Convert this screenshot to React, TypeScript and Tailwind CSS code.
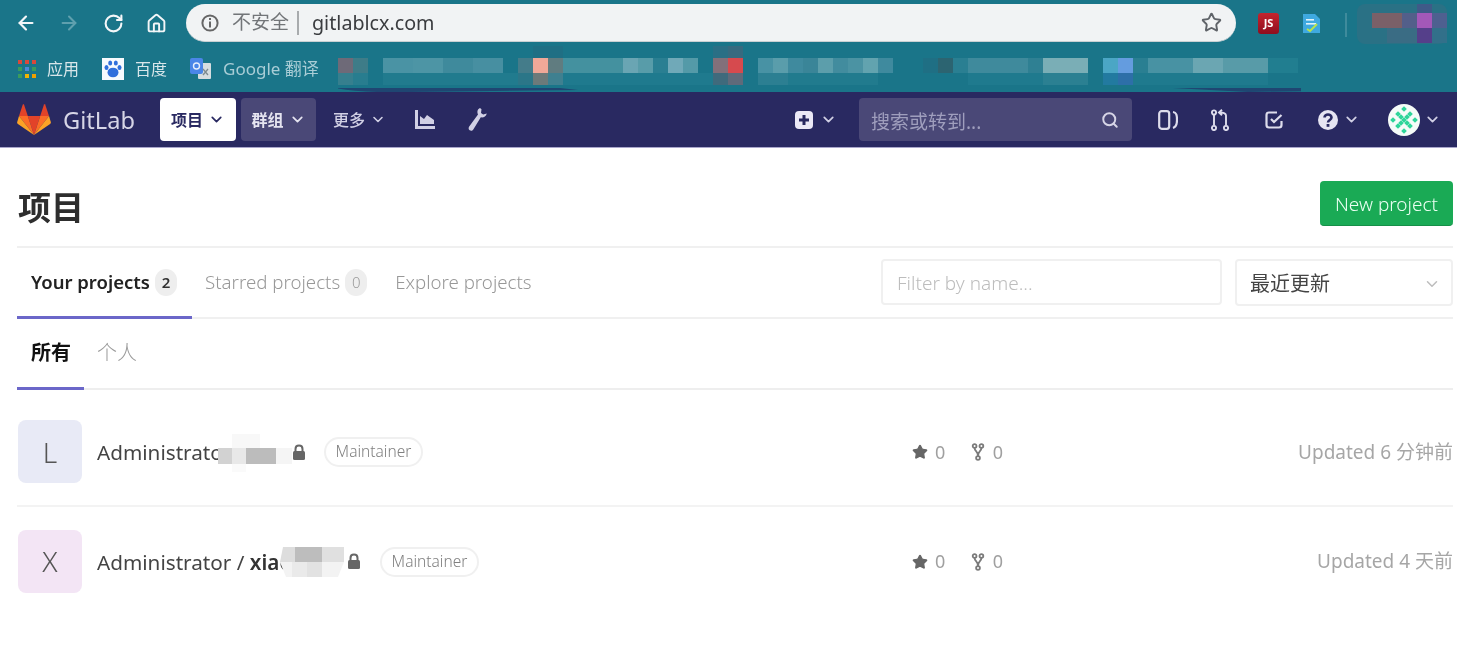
import React from "react";
import { ArrowLeft, ArrowRight, RotateCw, Home, Star, ChevronDown, Search } from "lucide-react";

const top: [number, number, string][] = [
  [0,15,"#6e6a78"],[15,15,"#3e7c88"],[45,30,"#4a93a4"],[75,30,"#4d95a5"],[105,30,"#3f8a9c"],[135,30,"#478fa1"],[180,15,"#447c8a"],[195,15,"#f0a898"],[210,15,"#607c80"],[225,60,"#44919f"],[285,15,"#6aa5b3"],[300,15,"#589ca9"],[315,15,"#2a7f92"],[330,15,"#70a9b8"],[345,15,"#549aa8"],[375,15,"#82707a"],[390,15,"#d64a4e"],[420,15,"#4892a4"],[435,15,"#5a9dab"],[450,15,"#3f8a9e"],[465,15,"#3a8598"],[480,15,"#5c9eab"],[495,15,"#428c9e"],[510,15,"#4b93a3"],[525,15,"#62a3af"],[540,15,"#3f8a9e"],[585,15,"#1f6f84"],[600,15,"#2c6471"],[615,15,"#2a7f92"],[630,60,"#3f8a9c"],[690,15,"#2f8093"],[705,45,"#7aaeb6"],[765,15,"#4ba6c5"],[780,15,"#649cdf"],[795,15,"#2a7f92"],[810,45,"#4892a3"],[855,30,"#6ba6b2"],[885,45,"#589ba8"],[930,30,"#217e90"],
];
const bottom: [number, number, string][] = [
  [0,15,"#367f8e"],[15,15,"#287d8f"],[45,150,"#217b8e"],[180,15,"#2b7688"],[195,15,"#6c7a7a"],[210,15,"#3f8090"],[225,150,"#1f7a8e"],[375,15,"#3f6a7c"],[390,15,"#5f6a7a"],[420,30,"#2c7f92"],[450,90,"#217b8e"],[630,90,"#1f7a8e"],[690,15,"#1f7a8e"],[705,45,"#2b8092"],[765,15,"#227aa0"],[780,15,"#2d6fa8"],[795,135,"#1f7a8e"],
];

function Mosaic() {
  return (
    <svg width="963" height="46" viewBox="0 0 963 46" className="shrink-0">
      <rect x="375" y="-2" width="15" height="15" fill="#2a6f85" />
      <rect x="390" y="-2" width="15" height="15" fill="#376a7f" />
      <rect x="195" y="-2" width="30" height="15" fill="#1f6f84" />
      {top.map(([x, w, c], i) => <rect key={i} x={x} y="12" width={w} height="15" fill={c} />)}
      {bottom.map(([x, w, c], i) => <rect key={i} x={x} y="27" width={w} height="12" fill={c} />)}
      <path d="M-2 42 Q20 47 70 46 L240 44 L222 42 Z" fill="#1f4672" />
      <path d="M835 42 L1000 42 L975 45 L910 46 Z" fill="#1f4672" />
    </svg>
  );
}

function TopRightMosaic() {
  return (
    <svg width="90" height="40" viewBox="0 0 90 40" className="shrink-0 ml-[10px]">
      <rect x="0" y="0" width="90" height="40" rx="8" fill="#2a7185" />
      <rect x="15" y="9" width="30" height="15" fill="#7a6068" />
      <rect x="45" y="9" width="15" height="15" fill="#535f8a" />
      <rect x="60" y="9" width="15" height="15" fill="#a358b8" />
      <rect x="75" y="9" width="15" height="15" fill="#4e6090" />
      <rect x="60" y="0" width="15" height="9" fill="#3f5a88" />
      <rect x="60" y="24" width="15" height="15" fill="#553f8a" />
      <rect x="30" y="24" width="30" height="15" fill="#3a6c84" />
      <rect x="75" y="24" width="15" height="15" fill="#32708a" />
    </svg>
  );
}

function Tanuki() {
  return (
    <svg width="34" height="32" viewBox="0 0 34 32" className="shrink-0">
      <path d="M17 31 L23.2 12 L10.8 12 Z" fill="#e24329" />
      <path d="M17 31 L10.8 12 L2 12 Z" fill="#fc6d26" />
      <path d="M2 12 L0.2 18 C0 18.8 0.2 19.5 0.9 20 L17 31 Z" fill="#fca326" />
      <path d="M2 12 L10.8 12 L7 0.6 C6.8 0 6 0 5.8 0.6 Z" fill="#e24329" />
      <path d="M17 31 L23.2 12 L32 12 Z" fill="#fc6d26" />
      <path d="M32 12 L33.8 18 C34 18.8 33.8 19.5 33.1 20 L17 31 Z" fill="#fca326" />
      <path d="M32 12 L23.2 12 L27 0.6 C27.2 0 28 0 28.2 0.6 Z" fill="#e24329" />
    </svg>
  );
}

function Identicon() {
  const cells = [[8,8],[20,8],[8,20],[20,20],[14,14],[14,3],[14,25],[3,14],[25,14],[11,11],[17,11],[11,17],[17,17]];
  return (
    <svg width="32" height="32" viewBox="0 0 32 32" className="shrink-0">
      <circle cx="16" cy="16" r="16" fill="#f5fbf8" />
      {cells.map(([x, y], i) => <rect key={i} x={x} y={y} width="4" height="4" transform={`rotate(45 ${x + 2} ${y + 2})`} fill="#2ed59a" />)}
    </svg>
  );
}

function Chev({ className }: { className: string }) {
  return <ChevronDown size={17} strokeWidth={2.4} className={className} />;
}

function Badge({ n, dark }: { n: string; dark?: boolean }) {
  return (
    <span className={`mt-[1px] flex items-center justify-center w-[22px] h-[27px] rounded-full bg-[#eeeeee] text-[15px] ${dark ? "text-[#333333]" : "text-[#9a9a9a]"}`}>{n}</span>
  );
}

function ForkIcon() {
  return (
    <svg width="14" height="18" viewBox="0 0 14 18" fill="none" stroke="#7a7a7a" strokeWidth="1.8" className="shrink-0 block">
      <circle cx="3.6" cy="3" r="1.9" />
      <circle cx="10.4" cy="3" r="1.9" />
      <circle cx="7" cy="15" r="1.9" />
      <path d="M3.6 5 C3.6 8.5 7 8 7 13 M10.4 5 C10.4 8.5 7 8 7 13" />
    </svg>
  );
}

function LockIcon({ className }: { className: string }) {
  return (
    <svg width="14" height="16" viewBox="0 0 14 16" className={`shrink-0 ${className}`}>
      <path d="M3.5 8 V5 C3.5 0.4 10.5 0.4 10.5 5 V8" fill="none" stroke="#666666" strokeWidth="2" />
      <rect x="1" y="7" width="12" height="9" rx="1.5" fill="#666666" />
    </svg>
  );
}

function Stats({ updated }: { updated: string }) {
  return (
    <>
      <div className="w-[91px] shrink-0 pt-[1px] flex items-center text-[18px] text-[#a0a0a0]">
        <Star size={16} fill="#666666" stroke="#666666" strokeWidth={2} className="shrink-0" />
        <span className="ml-[7px] w-[11px]">0</span>
        <span className="ml-[25px]"><ForkIcon /></span>
        <span className="ml-[8px]">0</span>
      </div>
      <div className="flex-1 pt-[1px] text-right text-[19px] text-[#a6a6a6] whitespace-nowrap">{updated}</div>
    </>
  );
}

export default function App() {
  return (
    <div className="w-[1457px] h-[664px] overflow-hidden bg-white [filter:blur(0.35px)] font-['Noto_Sans','Noto_Sans_CJK_SC',sans-serif]">
      {/* browser chrome */}
      <div className="h-[92px] bg-[#1a7589] text-white">
        <div className="h-[46px] pt-[4px] flex items-start">
          <div className="flex items-center h-[38px]">
            <ArrowLeft size={22} strokeWidth={2.4} className="ml-[15px] text-[#f3f6f8]" />
            <ArrowRight size={22} strokeWidth={2.2} className="ml-[21px] text-[#5fa0ae]" />
            <RotateCw size={21} strokeWidth={2.4} className="ml-[23px] text-[#f3f6f8]" />
            <Home size={21} strokeWidth={2.2} className="ml-[22px] text-[#f3f6f8]" />
          </div>
          <div className="ml-[19px] w-[1050px] h-[38px] rounded-full bg-[#f1f3f4] border-b border-[#c9d0d3] flex items-center">
            <svg width="18" height="18" viewBox="0 0 18 18" fill="none" className="ml-[15px] shrink-0">
              <circle cx="9" cy="9" r="7.6" stroke="#666" strokeWidth="2" />
              <rect x="8" y="4" width="2" height="2" fill="#666" />
              <rect x="8" y="7.5" width="2" height="6" fill="#666" />
            </svg>
            <span className="ml-[13px] text-[19px] text-[#727578]">不安全</span>
            <span className="ml-[8px] w-[2px] h-[24px] bg-[#a8abad]"></span>
            <span className="ml-[13px] text-[19.7px] leading-none text-[#3a3c3f]">gitlablcx.com</span>
            <Star size={21} strokeWidth={2.2} className="ml-auto mr-[14px] text-[#5f6368]" />
          </div>
          <div className="ml-[22px] mt-[9px] w-[21px] h-[21px] rounded-[3px] bg-gradient-to-b from-[#c4242e] to-[#8f0d1f] text-white text-[11px] font-bold flex items-center justify-center">JS</div>
          <svg width="19" height="20" viewBox="0 0 19 20" className="ml-[23px] mt-[10px] shrink-0">
            <path d="M1 0 H13 L18 5 V19 H1 Z" fill="#3fa9e0" />
            <rect x="4" y="5" width="8" height="1.6" fill="#dff2fb" />
            <rect x="4" y="9" width="10" height="1.6" fill="#dff2fb" />
            <path d="M5 15 L8 17 L15 10" stroke="#b7e34c" strokeWidth="2" fill="none" />
          </svg>
          <span className="ml-[24px] mt-[9px] w-[2px] h-[24px] bg-[#3f8b9c]"></span>
          <TopRightMosaic />
        </div>
        <div className="h-[46px] flex items-center text-[16px] text-[#d8e6ea]">
          <svg width="18" height="19" viewBox="0 0 18 19" className="ml-[18px] shrink-0">
            {[["#d9483b","#d9483b","#d9483b"],["#3a9b5c","#4a88d9","#3a9b5c"],["#3a9b5c","#f0b400","#f0a000"]].map((r, y) =>
              r.map((c, x) => <rect key={`${x}${y}`} x={x * 7} y={y * 7} width="4" height="4" fill={c} />))}
          </svg>
          <span className="ml-[11px] w-[33px] whitespace-nowrap">应用</span>
          <svg width="22" height="22" viewBox="0 0 22 22" className="ml-[22px] shrink-0">
            <rect width="22" height="22" fill="#f7fafd" />
            <ellipse cx="11" cy="14.5" rx="5.5" ry="4.8" fill="#2f6fdc" />
            <ellipse cx="4.5" cy="9.5" rx="2" ry="2.6" fill="#2f6fdc" />
            <ellipse cx="17.5" cy="9.5" rx="2" ry="2.6" fill="#2f6fdc" />
            <ellipse cx="8.2" cy="5" rx="2" ry="2.6" fill="#2f6fdc" />
            <ellipse cx="13.8" cy="5" rx="2" ry="2.6" fill="#2f6fdc" />
          </svg>
          <span className="ml-[11px] w-[33px] whitespace-nowrap">百度</span>
          <svg width="22" height="22" viewBox="0 0 22 22" className="ml-[22px] shrink-0">
            <rect x="8" y="5" width="13" height="16" rx="1" fill="#d6dde0" />
            <rect x="0" y="0" width="13" height="16" rx="2" fill="#4a86e8" />
            <circle cx="6.5" cy="8" r="3" fill="none" stroke="#e6eefc" strokeWidth="1.4" />
            <path d="M13 11 L18 17 M18 11 L13 17" stroke="#7d8a8f" strokeWidth="1.3" />
          </svg>
          <span className="ml-[11px] w-[115px] whitespace-nowrap text-[#a9cdd6] text-[17px]">Google 翻译</span>
          <Mosaic />
        </div>
      </div>

      {/* gitlab nav */}
      <nav className="h-[56px] bg-[#292961] border-b border-[#a9a6cb] flex items-center text-[#d1d0e5]">
        <div className="ml-[17px]"><Tanuki /></div>
        <span className="ml-[12px] w-[72px] pt-[2px] text-[23.6px] leading-none whitespace-nowrap text-[#d6d5e6]">GitLab</span>
        <div className="ml-[25px] w-[76px] h-[43px] bg-white rounded-[4px] flex items-center justify-center text-[#292961] text-[16px] font-bold">
          项目<Chev className="ml-[5px]" />
        </div>
        <div className="ml-[5px] w-[75px] h-[43px] bg-[#4a4877] rounded-[4px] flex items-center justify-center text-[#e5e4f0] text-[16px] font-bold">
          群组<Chev className="ml-[5px]" />
        </div>
        <div className="ml-[17px] flex items-center text-[16px] font-medium w-[53px] whitespace-nowrap">
          更多<Chev className="ml-[5px]" />
        </div>
        <svg width="20" height="19" viewBox="0 0 20 19" className="ml-[29px] shrink-0" fill="#d1d0e5">
          <path d="M0 0 H3 V16 H20 V19 H0 Z" />
          <path d="M5 14 V6 L9 9 L12 5 L19 10 V14 Z" />
        </svg>
        <svg width="19" height="23" viewBox="0 0 19 23" className="ml-[33px] shrink-0" fill="#d1d0e5">
          <path d="M12 0 C9.5 1 8.7 4 10 6.5 L1.2 18.5 C0.2 20 0.5 21.5 1.7 22.3 C3 23.2 4.5 22.8 5.3 21.5 L12.8 9.3 C15.5 9.8 18 8.5 18.8 5.5 L15.2 6.5 L13 5 L13.5 1.2 Z" />
        </svg>
        <svg width="18" height="18" viewBox="0 0 18 18" className="ml-[308px] shrink-0">
          <rect width="18" height="18" rx="4" fill="#ebe9f7" />
          <path d="M9 4 V14 M4 9 H14" stroke="#292961" strokeWidth="3" />
        </svg>
        <Chev className="ml-[7px]" />
        <div className="ml-[22px] w-[273px] h-[43px] rounded-[4px] bg-[#4a4877] flex items-center justify-between px-[12px] text-[19px] text-[#9f9ebd]">
          <span className="pt-[5px]">搜索或转到...</span>
          <Search size={18} strokeWidth={2.6} className="mr-[1px] text-[#d6d5e6]" />
        </div>
        <svg width="20" height="20" viewBox="0 0 20 20" fill="none" stroke="#dddcec" strokeWidth="2.2" className="ml-[26px] shrink-0">
          <rect x="1.2" y="1.2" width="10" height="17.6" rx="2.5" />
          <path d="M15 2 C18.5 2.5 19 5 19 10 C19 15 18 17 15 18" />
        </svg>
        <svg width="18" height="22" viewBox="0 0 18 22" fill="none" stroke="#dddcec" strokeWidth="1.9" className="ml-[33px] shrink-0">
          <circle cx="3" cy="3.5" r="2.1" />
          <circle cx="3" cy="19" r="2.1" />
          <circle cx="15" cy="19" r="2.1" />
          <path d="M3 6 V16.5 M15 16.5 V6.5 C15 4.5 13 3.5 9 3.5 M11 0.8 L8 3.5 L11 6.2" />
        </svg>
        <svg width="18" height="18" viewBox="0 0 18 18" fill="none" stroke="#dddcec" strokeWidth="2.2" className="ml-[36px] shrink-0">
          <path d="M12 1.5 H4 C2.4 1.5 1.5 2.4 1.5 4 V14 C1.5 15.6 2.4 16.5 4 16.5 H14 C15.6 16.5 16.5 15.6 16.5 14 V10" />
          <path d="M6 8 L9 11 L16.5 4" />
        </svg>
        <svg width="20" height="20" viewBox="0 0 20 20" className="ml-[35px] shrink-0">
          <circle cx="10" cy="10" r="10" fill="#e6e5f2" />
          <path d="M6.5 7.5 C6.5 3.5 13.5 3.5 13.5 7.5 C13.5 10 10 10 10 12.5" fill="none" stroke="#292961" strokeWidth="2.6" />
          <rect x="8.6" y="14" width="2.8" height="2.8" fill="#292961" />
        </svg>
        <Chev className="ml-[5px]" />
        <div className="ml-[28px]"><Identicon /></div>
        <Chev className="ml-[4px]" />
      </nav>

      {/* page */}
      <main className="ml-[17px] mr-[4px]">
        <header className="h-[100px] flex items-start justify-between border-b-2 border-[#f0f0f0]">
          <h1 className="mt-[43px] text-[33px] font-bold text-[#2e2e2e] leading-none pl-[1px]">项目</h1>
          <button className="mt-[33px] w-[133px] h-[45px] pt-[3px] rounded-[4px] bg-[#1aaa55] border-b border-[#168f48] text-[#eafff2] text-[19px] font-light">New project</button>
        </header>

        <div className="h-[71px] flex border-b-2 border-[#f0f0f0]">
          <div className="w-[175px] h-[71px] border-b-[3px] border-[#6b67c9] pl-[14px] flex items-start pt-[20px] text-[18.5px] font-semibold text-[#222222] whitespace-nowrap">
            <span className="mr-[5px]">Your projects</span><Badge n="2" dark />
          </div>
          <div className="ml-[13px] flex items-start pt-[20px] text-[18.7px] text-[#989898] whitespace-nowrap font-light">
            <span className="mr-[5px]">Starred projects</span><Badge n="0" />
          </div>
          <div className="ml-[28px] pt-[20px] text-[18.7px] text-[#989898] whitespace-nowrap font-light">Explore projects</div>
          <div className="ml-auto pt-[11px] flex items-start">
            <div className="w-[341px] h-[46px] border-2 border-[#f0f0f0] rounded-[4px] flex items-center pl-[14px] pt-[2px] text-[19px] text-[#bdbdbd] font-light">Filter by name...</div>
            <div className="ml-[13px] w-[218px] h-[47px] border-2 border-[#f0f0f0] rounded-[4px] flex items-center justify-between pl-[13px] pr-[10px] pt-[2px] text-[20px] text-[#444444]">
              <span>最近更新</span><ChevronDown size={18} className="text-[#bdbdbd]" />
            </div>
          </div>
        </div>

        <div className="h-[71px] flex border-b-2 border-[#eeeeee]">
          <div className="w-[67px] h-[71px] border-b-[3px] border-[#6b67c9] pl-[14px] pt-[19px] text-[20px] font-bold text-[#111111] whitespace-nowrap">所有</div>
          <div className="ml-[13px] pt-[19px] text-[20px] text-[#9a9a9a] whitespace-nowrap font-light">个人</div>
        </div>

        <div className="h-[117px] pt-[8px] flex items-center border-b-2 border-[#f3f3f3]">
          <div className="w-[895px] shrink-0 flex items-center pl-[1px]">
            <div className="w-[64px] h-[63px] rounded-[8px] bg-[#e8eaf6] flex items-center justify-center text-[28px] text-[#555555] font-light">L</div>
            <div className="ml-[15px] mt-[3px] relative w-[180px] text-[20.7px] text-[#444444] whitespace-nowrap">
              Administrato
              <svg width="74" height="40" viewBox="0 0 74 40" className="absolute left-[121px] top-[-3px]">
                <rect x="0" y="14" width="14" height="16" fill="#d2d2d2" />
                <rect x="14" y="14" width="14" height="16" fill="#e8e8e8" />
                <rect x="28" y="14" width="30" height="16" fill="#bcbcbc" />
                <rect x="58" y="14" width="16" height="16" fill="#f5f5f5" />
                <rect x="14" y="0" width="28" height="14" fill="#f8f8f8" />
                <rect x="14" y="30" width="14" height="8" fill="#fafafa" />
              </svg>
            </div>
            <LockIcon className="ml-[15px]" />
            <span className="ml-[18px] mt-[1px] w-[99px] h-[30px] rounded-full border-2 border-[#f0f0f0] flex items-center justify-center text-[15.5px] text-[#808080] font-light">Maintainer</span>
          </div>
          <Stats updated="Updated 6 分钟前" />
        </div>

        <div className="h-[112px] flex items-center pb-[4px]">
          <div className="w-[895px] shrink-0 flex items-center pl-[1px]">
            <div className="w-[64px] h-[63px] rounded-[8px] bg-[#f3e5f5] flex items-center justify-center text-[28px] text-[#555555] font-light">X</div>
            <div className="ml-[15px] mt-[4px] relative w-[247px] text-[20.7px] text-[#444444] whitespace-nowrap">
              Administrator / <span className="font-semibold text-[#333333]">xiao</span>
              <svg width="64" height="30" viewBox="0 0 64 30" className="absolute left-[183px] top-[0px]">
                <path d="M3 0 H64 V15 H0 Z" fill="#dddddd" />
                <rect x="15" y="0" width="27" height="15" fill="#bdbdbd" />
                <rect x="42" y="0" width="22" height="15" fill="#e0e0e0" />
                <path d="M0 15 H64 L58 30 H6 Z" fill="#f3f3f3" />
                <rect x="12" y="15" width="15" height="15" fill="#eaeaea" />
                <rect x="27" y="15" width="15" height="15" fill="#e2e2e2" />
              </svg>
            </div>
            <LockIcon className="ml-[3px]" />
            <span className="ml-[19px] mt-[2px] w-[99px] h-[30px] rounded-full border-2 border-[#f0f0f0] flex items-center justify-center text-[15.5px] text-[#808080] font-light">Maintainer</span>
          </div>
          <Stats updated="Updated 4 天前" />
        </div>
      </main>
    </div>
  );
}
